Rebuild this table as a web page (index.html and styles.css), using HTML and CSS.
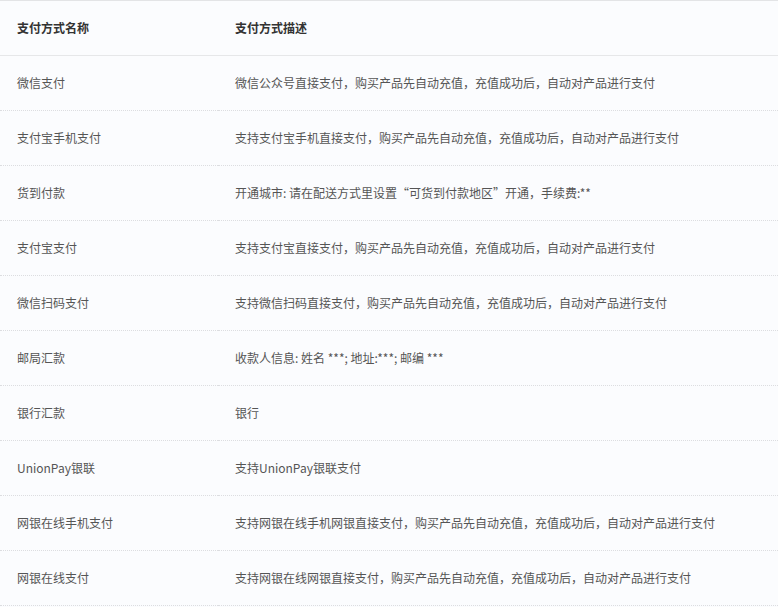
FILE: index.html
```html
<!DOCTYPE html>
<html lang="zh-CN">
<head>
<meta charset="utf-8">
<title>支付方式</title>
<link rel="stylesheet" href="styles.css">
</head>
<body>
<table class="pay-table">
  <thead>
    <tr><th class="col-name">支付方式名称</th><th>支付方式描述</th></tr>
  </thead>
  <tbody>
    <tr><td>微信支付</td><td>微信公众号直接支付，购买产品先自动充值，充值成功后，自动对产品进行支付</td></tr>
    <tr><td>支付宝手机支付</td><td>支持支付宝手机直接支付，购买产品先自动充值，充值成功后，自动对产品进行支付</td></tr>
    <tr><td>货到付款</td><td>开通城市: 请在配送方式里设置“可货到付款地区”开通，手续费:**</td></tr>
    <tr><td>支付宝支付</td><td>支持支付宝直接支付，购买产品先自动充值，充值成功后，自动对产品进行支付</td></tr>
    <tr><td>微信扫码支付</td><td>支持微信扫码直接支付，购买产品先自动充值，充值成功后，自动对产品进行支付</td></tr>
    <tr><td>邮局汇款</td><td>收款人信息: 姓名 ***; 地址:***; 邮编 ***</td></tr>
    <tr><td>银行汇款</td><td>银行</td></tr>
    <tr><td>UnionPay银联</td><td>支持UnionPay银联支付</td></tr>
    <tr><td>网银在线手机支付</td><td>支持网银在线手机网银直接支付，购买产品先自动充值，充值成功后，自动对产品进行支付</td></tr>
    <tr><td>网银在线支付</td><td>支持网银在线网银直接支付，购买产品先自动充值，充值成功后，自动对产品进行支付</td></tr>
  </tbody>
</table>
</body>
</html>
```

FILE: styles.css
```css
html, body {
  margin: 0;
  padding: 0;
  background: #fbfcfe;
}
body {
  font-family: "Noto Sans CJK SC", "Microsoft YaHei", sans-serif;
  font-size: 12px;
  color: #555;
}
.pay-table {
  width: 778px;
  border-collapse: collapse;
  border-top: 1px solid #e3e4e6;
}
.pay-table th,
.pay-table td {
  height: 54px;
  padding: 0 0 0 17px;
  text-align: left;
  vertical-align: middle;
  line-height: 16px;
  white-space: nowrap;
}
.pay-table .col-name {
  width: 201px;
}
.pay-table th {
  font-weight: bold;
  color: #333;
  border-bottom: 1px solid #e6e7e9;
}
.pay-table td {
  border-bottom: 1px dotted #dcdde0;
}
```
